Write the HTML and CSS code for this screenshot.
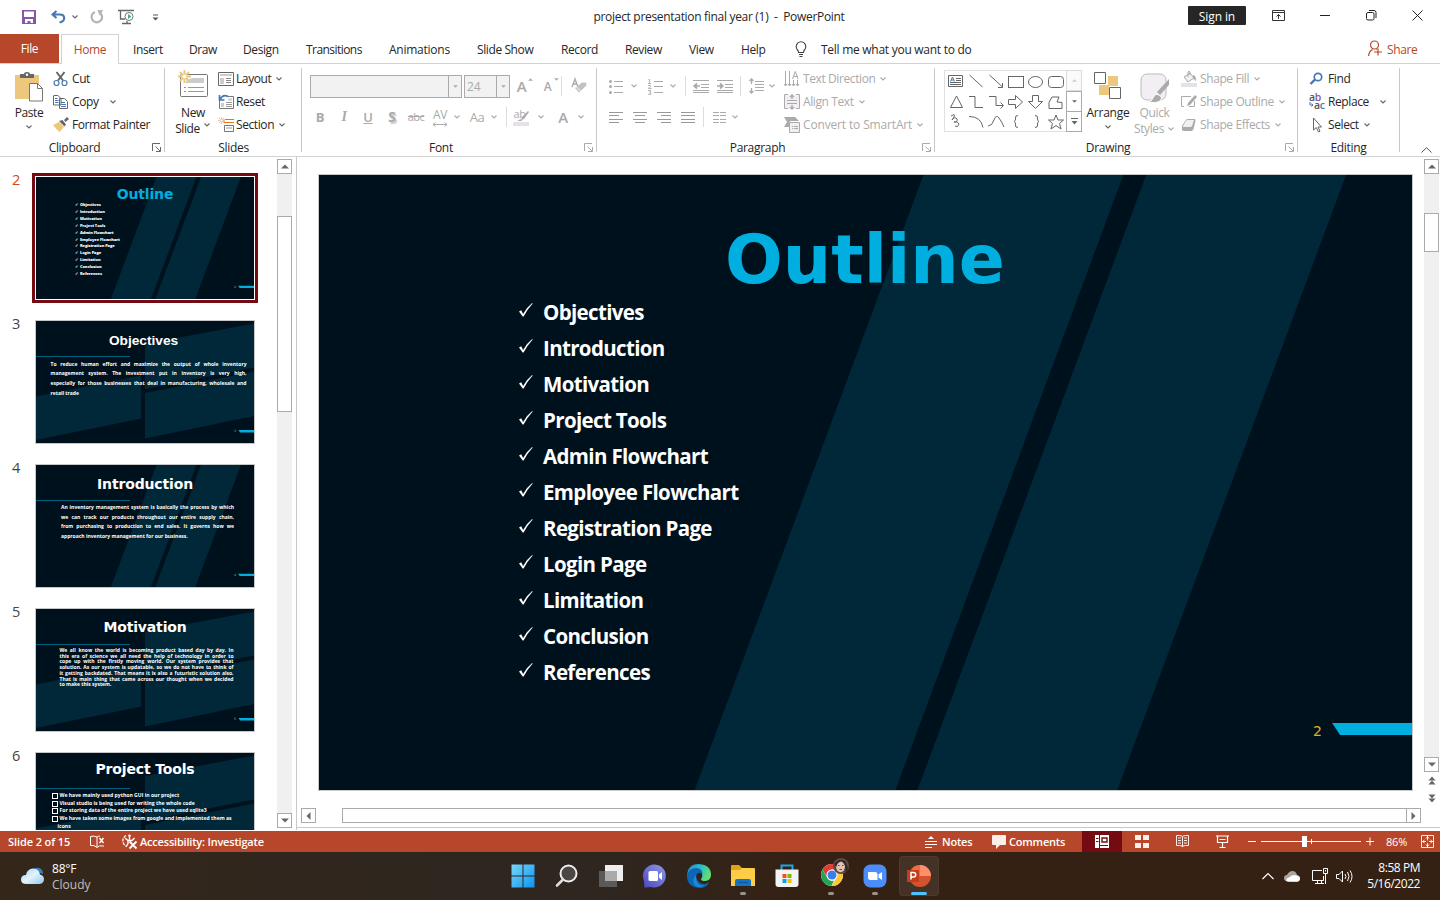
FILE: index.html
```html
<!DOCTYPE html>
<html lang="en">
<head>
<meta charset="utf-8">
<title>project presentation final year (1) - PowerPoint</title>
<link rel="stylesheet" href="styles.css">
</head>
<body>
<svg class="defs" width="0" height="0">
  <defs>
    <symbol id="chev" viewBox="0 0 8 6"><path d="M1.5 1.5 4 4 6.5 1.5" fill="none" stroke="currentColor" stroke-width="1.1"/></symbol>
    <symbol id="launch" viewBox="0 0 9 9"><path d="M.5 8V.5H8M3.500 3.500 8 8M8.500 4V8.500H4" fill="none" stroke="currentColor"/></symbol>
    <symbol id="tri-up" viewBox="0 0 8 5"><path d="M0 4.500 4 .5 8 4.500z" fill="currentColor"/></symbol>
    <symbol id="tri-down" viewBox="0 0 8 5"><path d="M0 .5 4 4.500 8 .5z" fill="currentColor"/></symbol>
    <symbol id="tick" viewBox="0 0 16 16"><path d="M1 9.400 3.200 8.200l1.900 3.700Q9 5 14.200 1l.5.4Q9.500 7 5.600 14.500H4.700z" fill="#fff"/></symbol>
    <symbol id="bg-stripes" viewBox="0 0 1094 615" preserveAspectRatio="none">
      <path d="M0 0h1094v615H0z" fill="#00111e"/>
      <path d="M605 0h200L577 615H376zM828 0h200L799 615H599z" fill="#002838"/>
      <path d="M1014 548h80v12h-72z" fill="#00aedf"/>
    </symbol>
    <symbol id="bg-panels" viewBox="0 0 218 122" preserveAspectRatio="none">
      <path d="M0 0h218v122H0z" fill="#00111e"/>
      <path d="M109 23 218 2.500v44L109 68zM109 72 218 50.500V95L109 117.500zM0 75.500 105 54.500v43L0 119z" fill="#002838"/>
      <path d="M202.500 109H218v2.500h-14z" fill="#00aedf"/>
    </symbol>
  </defs>
</svg>

<header class="titlebar">
  <div class="quick">
    <svg class="q-save" width="14" height="14" viewBox="0 0 14 14"><path d="M0 0h14v14H0z" fill="#8656ad"/><path d="M2 1.500h10V7H2zM3 9h8v4H8.500v-2h-3v2H3z" fill="#fff"/></svg>
    <svg class="q-undo" width="15" height="14" viewBox="0 0 15 14"><path d="M5.500 1 1.500 4.500l4 3.500M2 4.500h7Q13 4.500 13.200 8 13.200 11.500 8.500 12.500" fill="none" stroke="#4479b5" stroke-width="2.100"/></svg>
    <svg class="q-chev chev" width="8" height="6"><use href="#chev"/></svg>
    <svg class="q-redo" width="14" height="14" viewBox="0 0 14 14"><path d="M5 2A5.300 5.300 0 1 0 10.500 3.200" fill="none" stroke="#b4b4b4" stroke-width="2.200"/><path d="M7.500 0H13L9.800 6z" fill="#b4b4b4"/></svg>
    <svg class="q-show" width="17" height="16" viewBox="0 0 17 16"><path d="M0 1.500h16M2.500 2v8H7M9 12v2.500M4 14.500h9" fill="none" stroke="#666" stroke-width="1.300"/><circle cx="11" cy="7.500" r="4" fill="#fff" stroke="#777"/><path d="M10 5v5l3.500-2.500z" fill="#4ea683"/></svg>
    <svg class="q-more" width="7" height="7" viewBox="0 0 7 7"><path d="M1 1h5" stroke="#555"/><path d="M.5 3.500h6L3.500 6.500z" fill="#555"/></svg>
  </div>
  <div class="doc-title">project presentation final year (1)&nbsp; -&nbsp; PowerPoint</div>
  <div class="window-tools">
    <span class="signin">Sign in</span>
    <svg width="13" height="11" viewBox="0 0 13 11"><path d="M.5.5h12v10H.5zM.5 2.500h12M6.500 9V4.500M4.500 6.500l2-2 2 2" fill="none" stroke="#333"/></svg>
    <svg width="11" height="11" viewBox="0 0 11 11"><path d="M0 5.500h10" stroke="#222"/></svg>
    <svg width="11" height="11" viewBox="0 0 11 11"><rect x=".5" y="2.500" width="7.500" height="7.500" rx="1.500" fill="none" stroke="#222"/><path d="M3 .5h5Q10 .5 10 2.500V8" fill="none" stroke="#222"/></svg>
    <svg width="11" height="11" viewBox="0 0 11 11"><path d="m.5.500 10 10M10.500.5l-10 10" stroke="#222"/></svg>
  </div>
</header>

<nav class="tabs">
  <span class="file">File</span><span class="home">Home</span>
  <span>Insert</span><span>Draw</span><span>Design</span><span>Transitions</span><span>Animations</span><span>Slide Show</span><span>Record</span><span>Review</span><span>View</span><span>Help</span>
  <svg class="bulb" width="12" height="17" viewBox="0 0 12 17"><path d="M3.500 11.500Q3.500 9.800 2.200 8.500 1.200 7.300 1.200 5.500A4.700 4.700 0 0 1 10.800 5.500Q10.800 7.300 9.800 8.500 8.500 9.800 8.500 11.500zM4 13.500h4M4.500 15.500h3" fill="none" stroke="#444" stroke-width="1.100"/></svg>
  <span class="tell">Tell me what you want to do</span>
  <span class="share"><svg width="14" height="17" viewBox="0 0 14 17"><path d="M.6 16Q1 11 4.600 9.600M9 9.500 8.500 9.200" fill="none" stroke="#b7472a" stroke-width="1.200"/><circle cx="6.500" cy="5" r="4" fill="none" stroke="#b7472a" stroke-width="1.200"/><path d="M6 12h8M10 8.500v7" stroke="#b7472a" stroke-width="1.200"/></svg>Share</span>
</nav>

<section class="ribbon">
  <div class="group g-clip">
    <div class="body">
      <div class="big paste">
        <svg width="28" height="30" viewBox="0 0 28 30"><path d="M0 3h24v24H0z" fill="#edc77d"/><path d="M5 6V2h4Q9 0 12 0t3 2h4v4z" fill="#666"/><circle cx="12" cy="2.700" r="1.200" fill="#fff"/><path d="M14.500 11.500h8l5 5v12.500h-13z" fill="#fff" stroke="#777"/><path d="M22.500 11.500v5h5" fill="none" stroke="#777"/></svg>
        <span>Paste</span><svg class="chev" width="8" height="6"><use href="#chev"/></svg>
      </div>
      <div class="rows">
        <div class="cmd"><svg width="16" height="16" viewBox="0 0 16 16"><path d="M3.500 1 10 9.500M11.500 1 5 9.500" stroke="#666" stroke-width="2"/><circle cx="3.500" cy="12" r="2.500" fill="none" stroke="#4479b5" stroke-width="1.200"/><circle cx="11.500" cy="12" r="2.500" fill="none" stroke="#4479b5" stroke-width="1.200"/></svg><span>Cut</span></div>
        <div class="cmd"><svg width="16" height="16" viewBox="0 0 16 16"><path d="M1 1.500h4l3 3V11H.5V1.500M6.500 4.500h5l3 3v7h-8z" fill="#fff" stroke="#666"/><path d="M2 4.500h2.500M2 6.500h3.500M2 8.500h3.500M8 8.500h4M8 10.500h5M8 12.500h5" stroke="#4479b5"/></svg><span>Copy</span><svg class="chev wide" width="8" height="6"><use href="#chev"/></svg></div>
        <div class="cmd"><svg width="16" height="16" viewBox="0 0 16 16"><path d="M0 8 6 5l5 5-4.500 5Q4 13 0 8z" fill="#edc77d"/><path d="m6 4 5.500 5.500 1.500-2L9.500 3zM11 3l3-3 2 2-3.500 3z" fill="#666"/></svg><span>Format Painter</span></div>
      </div>
    </div>
    <div class="label">Clipboard</div><svg class="launch" width="9" height="9"><use href="#launch"/></svg>
  </div>

  <div class="group g-slides">
    <div class="body">
      <div class="big newslide">
        <svg width="31" height="28" viewBox="0 0 31 28"><rect x="2.500" y="4.500" width="27" height="22" rx="1" fill="#fff" stroke="#777"/><path d="M14 8h12v5H8v-2z" fill="#ccc"/><path d="M6 17.500h2M10 17.500h16M6 21.500h2M10 21.500h16" stroke="#999"/><path d="M6.500 0v13M0 6.500h13M2 2l9 9M11 2l-9 9" stroke="#edc77d" stroke-width="2"/><circle cx="6.500" cy="6.500" r="2" fill="#fff"/></svg>
        <span>New</span><span class="with-chev">Slide <svg class="chev" width="8" height="6"><use href="#chev"/></svg></span>
      </div>
      <div class="rows">
        <div class="cmd"><svg width="16" height="16" viewBox="0 0 16 16"><path d="M.5 1.500h15v13H.5z" fill="#fff" stroke="#666"/><path d="M2 3h12v2H2zM2 7h4v6H2z" fill="#ccc"/><path d="M8 7.500h5M8 9.500h5M8 11.500h5" stroke="#888"/></svg><span>Layout</span><svg class="chev" width="8" height="6"><use href="#chev"/></svg></div>
        <div class="cmd"><svg width="16" height="16" viewBox="0 0 16 16"><path d="M1.500 6v8.500h14v-12H9" fill="none" stroke="#777"/><path d="M10 4.500h4v2h-4zM3 9h3v4H3z" fill="#ccc"/><path d="M8 8.500h6M8 10.500h6M8 12.500h6" stroke="#999"/><path d="M1.500 1v5h5M2 5.500Q5 0 10 2.500" fill="none" stroke="#4479b5" stroke-width="1.700"/></svg><span>Reset</span></div>
        <div class="cmd"><svg width="16" height="16" viewBox="0 0 16 16"><path d="M7 2.500h9" stroke="#e8731e"/><path d="M6 5.500h10M6 2.500v3" stroke="#e8731e"/><path d="M6.500 8.500h9v6h-9z" fill="#fff" stroke="#777"/><path d="M8 10h6v2H8z" fill="#ccc"/><path d="M3.500 0v7M0 3.500h7M1 1l5 5M6 1 1 6" stroke="#edc77d"/><circle cx="3.500" cy="3.500" r="1" fill="#fff"/></svg><span>Section</span><svg class="chev" width="8" height="6"><use href="#chev"/></svg></div>
      </div>
    </div>
    <div class="label">Slides</div>
  </div>

  <div class="group g-font off">
    <div class="stack">
      <div class="line">
        <div class="combo c-name"><span></span><i><svg width="5" height="3" viewBox="0 0 8 5"><use href="#tri-down"/></svg></i></div>
        <div class="combo c-size"><span>24</span><i><svg width="5" height="3" viewBox="0 0 8 5"><use href="#tri-down"/></svg></i></div>
        <span class="cell grow-a">A<svg width="5" height="3" viewBox="0 0 8 5"><use href="#tri-up"/></svg></span>
        <span class="cell shrink-a">A<svg width="5" height="3" viewBox="0 0 8 5"><use href="#tri-down"/></svg></span>
        <i class="sep s5"></i>
        <svg class="eraser" width="16" height="16" viewBox="0 0 16 16"><path d="M1 9 4 1l3 8M2 6h4" fill="none" stroke="#aaa" stroke-width="1.400"/><path d="m4 10 7-5.500h4l.5 3L8 14.500z" fill="#c4c0c6"/><path d="m5.500 9 4 4" stroke="#fff"/></svg>
      </div>
      <div class="line l2">
        <b class="cell">B</b><em class="cell">I</em><u class="cell">U</u><span class="cell sh">S</span><s class="cell">abc</s><span class="cell av">AV<svg width="16" height="5" viewBox="0 0 16 5"><path d="M1 2.500h14M3.500.5l-2.500 2 2.500 2M12.500.5l2.500 2-2.500 2" fill="none" stroke="#aaa"/></svg></span><svg class="chev c1" width="8" height="6"><use href="#chev"/></svg><span class="cell aa">Aa</span><svg class="chev c1" width="8" height="6"><use href="#chev"/></svg><i class="sep s2"></i><span class="cell hl">ab<svg width="17" height="15" viewBox="0 0 17 15"><path d="M0 11h16v4H0z" fill="#e6e0e8"/><path d="m15 0-6 6-1 3 3-1 5-7z" fill="#aaa"/><path d="M8 8 4 10h5z" fill="#aaa"/></svg></span><svg class="chev c3" width="8" height="6"><use href="#chev"/></svg><span class="cell fa">A</span><svg class="chev c2" width="8" height="6"><use href="#chev"/></svg>
      </div>
    </div>
    <div class="label">Font</div><svg class="launch" width="9" height="9"><use href="#launch"/></svg>
  </div>

  <div class="group g-para off">
    <div class="body">
      <div class="stack p-stack">
        <div class="line">
          <span class="cell"><svg width="14" height="15" viewBox="0 0 14 15"><path d="M5 2.500h9M5 7.500h9M5 13.500h9" stroke="#aaa"/><circle cx="1.500" cy="2.500" r="1.500" fill="#aaa"/><circle cx="1.500" cy="7.500" r="1.500" fill="#aaa"/><circle cx="1.500" cy="13.500" r="1.500" fill="#aaa"/></svg></span><svg class="chev c2" width="8" height="6"><use href="#chev"/></svg>
          <span class="cell c5"><svg width="15" height="17" viewBox="0 0 15 17"><path d="M6 3.500h9M6 8.500h9M6 14.500h9" stroke="#aaa"/><path d="M.5 1.500h1.200V5M0 5.500h3M0 7.500h2.500v1.200L.5 10v.5h3M0 12.500h3l-1.500 1.800 1.500.5v1.500H0" fill="none" stroke="#aaa" stroke-width=".9"/></svg></span><svg class="chev c2" width="8" height="6"><use href="#chev"/></svg>
          <i class="sep s7"></i>
          <span class="cell c3"><svg width="16" height="13" viewBox="0 0 16 13"><path d="M0 .5h16M8 4.500h8M8 7.500h8M0 10.500h16M0 12.500h16" stroke="#aaa"/><path d="M7 6H2M4 3.500 1.200 6 4 8.500" fill="none" stroke="#aaa" stroke-width="1.700"/></svg></span>
          <span class="cell"><svg width="16" height="13" viewBox="0 0 16 13"><path d="M0 .5h16M8 4.500h8M8 7.500h8M0 10.500h16M0 12.500h16" stroke="#aaa"/><path d="M0 6h5M3 3.500 5.800 6 3 8.500" fill="none" stroke="#aaa" stroke-width="1.700"/></svg></span>
          <i class="sep s3"></i>
          <span class="cell c3"><svg width="15" height="16" viewBox="0 0 15 16"><path d="M6 3.500h9M6 6.500h9M6 9.500h9M6 12.500h9" stroke="#aaa"/><path d="M2.500 1v5M.5 3l2-2 2 2M2.500 15v-5M.5 13l2 2 2-2" fill="none" stroke="#aaa" stroke-width="1.300"/></svg></span><svg class="chev" width="8" height="6"><use href="#chev"/></svg>
        </div>
        <div class="line l2">
          <span class="cell"><svg width="14" height="11" viewBox="0 0 14 11"><path d="M0 .5h14M0 3.500h10M0 7.500h14M0 10.500h10" stroke="#999"/></svg></span>
          <span class="cell"><svg width="14" height="11" viewBox="0 0 14 11"><path d="M0 .5h14M2 3.500h10M0 7.500h14M2 10.500h10" stroke="#999"/></svg></span>
          <span class="cell"><svg width="14" height="11" viewBox="0 0 14 11"><path d="M0 .5h14M4 3.500h10M0 7.500h14M4 10.500h10" stroke="#999"/></svg></span>
          <span class="cell"><svg width="14" height="11" viewBox="0 0 14 11"><path d="M0 .5h14M0 3.500h14M0 7.500h14M0 10.500h14" stroke="#999"/></svg></span>
          <i class="sep s2b"></i>
          <span class="cell c3"><svg width="13" height="11" viewBox="0 0 13 11"><path d="M0 .5h6M7 .5h6M0 3.500h6M7 3.500h6M0 7.500h6M7 7.500h6M0 10.500h6M7 10.500h6" stroke="#aaa"/></svg></span><svg class="chev" width="8" height="6"><use href="#chev"/></svg>
        </div>
      </div>
      <div class="rows">
        <div class="cmd"><svg width="16" height="16" viewBox="0 0 16 16"><path d="M1.500 0v15M5.500 0v15M9.500 9v6M13.500 9v6M0 13l1.500 2L3 13M4 13l1.500 2L7 13M8 13l1.500 2 1.500-2M12 13l1.500 2 1.500-2M8.500 8l2.800-7.500L14 8M9.500 5.500h4" fill="none" stroke="#aaa"/></svg><span>Text Direction</span><svg class="chev" width="8" height="6"><use href="#chev"/></svg></div>
        <div class="cmd"><svg width="16" height="16" viewBox="0 0 16 16"><path d="M1 1h14v14H1z" fill="#f2eef4"/><path d="M4 .5H.5v14H4M12 .5h3.500v14H12M3 6.500h10M3 9.500h10" fill="none" stroke="#aaa"/><path d="M8 5V1M6 3l2-2 2 2M8 11v4M6 13l2 2 2-2" fill="none" stroke="#aaa" stroke-width="1.300"/></svg><span>Align Text</span><svg class="chev" width="8" height="6"><use href="#chev"/></svg></div>
        <div class="cmd"><svg width="16" height="16" viewBox="0 0 16 16"><path d="M0 0h11l4 4H7L5 5v5H0l3-5z" fill="#aaa"/><path d="M5.500 5.500h10v10h-10z" fill="#f2eef4" stroke="#aaa"/><path d="M8 9.500h1M10 9.500h4M8 11.500h1M10 11.500h4" stroke="#aaa"/></svg><span class="smart">Convert to SmartArt</span><svg class="chev" width="8" height="6"><use href="#chev"/></svg></div>
      </div>
    </div>
    <div class="label">Paragraph</div><svg class="launch" width="9" height="9"><use href="#launch"/></svg>
  </div>

  <div class="group g-draw">
    <div class="body">
      <div class="gallery">
        <svg width="122" height="61" viewBox="0 0 122 61" fill="none" stroke="#666">
          <path d="M3.500 4.500h14v11h-14zM11 7.500h5M11 9.500h5M5 11.500h11M5 13.500h11"/><path d="M5.500 10.500 7.500 6l2 4.500M6 9h3" stroke="#4479b5"/>
          <path d="m24.500 4 13 12M44.500 4l13 12M57.500 12v4.500H53"/>
          <rect x="63.500" y="5.500" width="15" height="11"/><ellipse cx="90.500" cy="11" rx="7" ry="5.500"/><rect x="103.500" y="5.500" width="15" height="11" rx="3"/>
          <path d="m11.500 25 6 11.500h-12zM24 25.500h6v11h8M44 25.500h7v9h7M55.500 31.500l3 3-3 3M63.500 28.500h7v-4l7 6.500-7 6.500v-4h-7zM87.500 24.500h6v6h4l-7 7-7-7h4zM107 26h7l-2 5 5 .5v6h-13v-6z"/>
          <path d="M6 45q5-3 3 1l-2 3q3-4 5-1 1 3-3 3 4-1 5 2-1 4-4 2M24 45.500q12 0 14 11M43 55q4 0 6-6t5-2 5 9M73 44.500q-3 0-2.500 2.500 .5 3-1.500 3.500 2 .5 1.500 3.500-.5 2.500 2.500 2.500M90 44.500q3 0 2.500 2.500-.5 3 1.500 3.500-2 .5-1.500 3.500.5 2.500-2.500 2.500M111 44l2 5h5.500l-4 3.500 1.500 5.500-5-3.500-5 3.500 1.500-5.500-4-3.500h5.500z"/>
        </svg>
        <div class="gal-btns"><i class="dim"><svg width="5" height="3" viewBox="0 0 8 5"><use href="#tri-up"/></svg></i><i><svg width="5" height="3" viewBox="0 0 8 5"><use href="#tri-down"/></svg></i><i><svg width="7" height="7" viewBox="0 0 7 7"><path d="M0 .5h7" stroke="#666"/><path d="M.5 3h6l-3 3.500z" fill="#666"/></svg></i></div>
      </div>
      <div class="big arrange">
        <svg width="28" height="28" viewBox="0 0 28 28"><path d="M14 4h10v10H14zM5 13h10v10H5z" fill="#edc77d"/><path d="M.5.5h11v11H.5zM15.500 15.500h11v11h-11z" fill="#fff" stroke="#666"/></svg>
        <span>Arrange</span><svg class="chev" width="8" height="6"><use href="#chev"/></svg>
      </div>
      <div class="big styles off">
        <svg width="30" height="30" viewBox="0 0 30 30"><rect x="1" y="1" width="25" height="26" rx="6" fill="#f2eef4" stroke="#bbb"/><path d="M29 6v6l-9 10-3-3z" fill="#aaa"/><path d="M7 29q5 0 6-4 2-5 6-3t2 5q-4 4-14 2z" fill="#aaa" stroke="#fff"/></svg>
        <span>Quick</span><span class="with-chev">Styles <svg class="chev" width="8" height="6"><use href="#chev"/></svg></span>
      </div>
      <div class="rows off">
        <div class="cmd"><svg width="16" height="16" viewBox="0 0 16 16"><path d="M0 12h16v4H0z" fill="#e6e0e8"/><path d="m3 6 6-4 4 5-6 4zM7 6V1Q8-.5 9 1v3" fill="#f2eef4" stroke="#aaa"/><path d="M12 4q3 0 3 6-2-1-3-4z" fill="#aaa"/></svg><span>Shape Fill</span><svg class="chev" width="8" height="6"><use href="#chev"/></svg></div>
        <div class="cmd"><svg width="16" height="16" viewBox="0 0 16 16"><path d="M10 2.500H.5v10H3M13.500 7v5.500H8" fill="none" stroke="#aaa"/><path d="m14 1 2 2-7 8-3 1 1-3z" fill="#aaa"/></svg><span>Shape Outline</span><svg class="chev" width="8" height="6"><use href="#chev"/></svg></div>
        <div class="cmd"><svg width="16" height="16" viewBox="0 0 16 16"><path d="M1 9 4 4q1-2 3-2h6q2 0 1.500 2l-2 8Q12 14 10 14H3Q0 14 1 9z" fill="#aaa"/><path d="m2 9 3-5.500Q5.500 3 7 3h6l-2 6Q10.500 10 9 10H2z" fill="#f2eef4"/></svg><span>Shape Effects</span><svg class="chev" width="8" height="6"><use href="#chev"/></svg></div>
      </div>
    </div>
    <div class="label">Drawing</div><svg class="launch dim" width="9" height="9"><use href="#launch"/></svg>
  </div>

  <div class="group g-edit">
    <div class="body">
      <div class="rows">
        <div class="cmd"><svg width="16" height="16" viewBox="0 0 16 16"><circle cx="9" cy="6" r="3.700" fill="none" stroke="#4479b5" stroke-width="1.700"/><path d="m6 8.500-4.500 4.500" stroke="#4479b5" stroke-width="2.400"/></svg><span>Find</span></div>
        <div class="cmd"><svg class="rep" width="17" height="17" viewBox="0 0 17 17"><text x="0" y="7.500" fill="#555">a<tspan fill="#8656ad">b</tspan></text><text x="5" y="15.500" fill="#555">a<tspan fill="#4479b5">c</tspan></text><path d="M1 9v3h2.500M2.500 10.500 4 12l-1.500 1.500" fill="none" stroke="#4479b5"/></svg><span>Replace</span><svg class="chev wide" width="8" height="6"><use href="#chev"/></svg></div>
        <div class="cmd"><svg width="16" height="16" viewBox="0 0 16 16"><path d="M4.500 1v12l2.700-2.500L9.500 15l1.500-.8L9 10h3.500z" fill="#fff" stroke="#666"/></svg><span>Select</span><svg class="chev" width="8" height="6"><use href="#chev"/></svg></div>
      </div>
    </div>
    <div class="label">Editing</div>
  </div>
  <svg class="collapse" width="11" height="6" viewBox="0 0 11 6"><path d="M.5 5.500 5.500.7l5 4.800" fill="none" stroke="#555"/></svg>
</section>

<main class="work">
  <aside class="panel">
    <div class="thumbs">
      <div class="item sel"><span class="num">2</span>
        <div class="thumb t2"><svg class="bg"><use href="#bg-stripes"/></svg>
          <h3>Outline</h3>
          <ul><li>Objectives</li><li>Introduction</li><li>Motivation</li><li>Project Tools</li><li>Admin Flowchart</li><li>Employee Flowchart</li><li>Registration Page</li><li>Login Page</li><li>Limitation</li><li>Conclusion</li><li>References</li></ul>
          <span class="pg">2</span>
        </div></div>
      <div class="item"><span class="num">3</span>
        <div class="thumb t3"><svg class="bg"><use href="#bg-panels"/></svg>
          <h3>Objectives</h3><hr>
          <div class="text"><p>To reduce human effort and maximize the output of whole inventory</p><p>management system. The investment put in inventory is very high,</p><p>especially for those businesses that deal in manufacturing, wholesale and</p><p class="last">retail trade</p></div>
          <span class="pg">3</span>
        </div></div>
      <div class="item"><span class="num">4</span>
        <div class="thumb t4"><svg class="bg"><use href="#bg-stripes"/></svg>
          <h3>Introduction</h3><hr>
          <div class="text"><p>An inventory management system is basically the process by which</p><p>we can track our products throughout our entire supply chain,</p><p>from purchasing to production to end sales. It governs how we</p><p class="last">approach inventory management for our business.</p></div>
          <span class="pg">4</span>
        </div></div>
      <div class="item"><span class="num">5</span>
        <div class="thumb t5"><svg class="bg"><use href="#bg-panels"/></svg>
          <h3>Motivation</h3><hr>
          <div class="text"><p>We all know the world is becoming product based day by day. In</p><p>this era of science we all need the help of technology in order to</p><p>cope up with the firstly moving world. Our system provides that</p><p>solution. As our system is updatable, so we do not have to think of</p><p>it getting backdated. That means it is also a futuristic solution also.</p><p>That is main thing that came across our thought when we decided</p><p class="last">to make this system.</p></div>
          <span class="pg">5</span>
        </div></div>
      <div class="item"><span class="num">6</span>
        <div class="thumb t6"><svg class="bg"><use href="#bg-panels"/></svg>
          <h3>Project Tools</h3><hr>
          <div class="text"><p class="box">We have mainly used python GUI in our project</p><p class="box">Visual studio is being used for writing the whole code</p><p class="box">For storing data of the entire project we have used sqlite3</p><p class="box">We have taken some images from google and implemented them as</p><p>icons</p></div>
        </div></div>
    </div>
    <div class="vscroll"><i class="btn"><svg width="8" height="5"><use href="#tri-up"/></svg></i><i class="grip"></i><i class="btn end"><svg width="8" height="5"><use href="#tri-down"/></svg></i></div>
  </aside>

  <section class="editor">
    <div class="stage">
      <div class="slide"><svg class="bg"><use href="#bg-stripes"/></svg>
        <h1>Outline</h1>
        <ul>
          <li><svg width="16" height="16"><use href="#tick"/></svg>Objectives</li><li><svg width="16" height="16"><use href="#tick"/></svg>Introduction</li><li><svg width="16" height="16"><use href="#tick"/></svg>Motivation</li><li><svg width="16" height="16"><use href="#tick"/></svg>Project Tools</li><li><svg width="16" height="16"><use href="#tick"/></svg>Admin Flowchart</li><li><svg width="16" height="16"><use href="#tick"/></svg>Employee Flowchart</li><li><svg width="16" height="16"><use href="#tick"/></svg>Registration Page</li><li><svg width="16" height="16"><use href="#tick"/></svg>Login Page</li><li><svg width="16" height="16"><use href="#tick"/></svg>Limitation</li><li><svg width="16" height="16"><use href="#tick"/></svg>Conclusion</li><li><svg width="16" height="16"><use href="#tick"/></svg>References</li>
        </ul>
        <span class="pageno">2</span>
      </div>
      <div class="vscroll main-scroll"><i class="btn"><svg width="8" height="5"><use href="#tri-up"/></svg></i><i class="grip"></i><i class="btn end"><svg width="8" height="5"><use href="#tri-down"/></svg></i>
        <div class="jump"><svg width="8" height="9" viewBox="0 0 8 9"><path d="M.5 4.500 4 .5l3.500 4zM.5 8.500 4 4.500l3.500 4z" fill="#666"/></svg><svg width="8" height="9" viewBox="0 0 8 9"><path d="M.5.5 4 4.500 7.500.5zM.5 4.500 4 8.500l3.500-4z" fill="#666"/></svg></div></div>
    </div>
    <div class="hscroll"><i class="btn"><svg width="5" height="8" viewBox="0 0 5 8"><path d="M4.500 0 .5 4l4 4z" fill="#666"/></svg></i><i class="grip"></i><i class="btn"><svg width="5" height="8" viewBox="0 0 5 8"><path d="M.5 0 4.500 4l-4 4z" fill="#666"/></svg></i></div>
  </section>
</main>

<footer class="status">
  <span class="st-slide">Slide 2 of 15</span>
  <svg class="st-spell" width="15" height="13" viewBox="0 0 15 13"><path d="M7 2Q4 .5.500 1.500v9Q4 9.500 7 12.500 8.500 10 14 11M7 2v10M7 2Q8.500 1 10 1" fill="none" stroke="#fff"/><path d="m9.500 3 4 5M13.500 3l-4 5" stroke="#fff" stroke-width="1.500"/></svg>
  <svg class="st-acc" width="17" height="15" viewBox="0 0 17 15"><path d="M5 1.500A6 6 0 0 0 6 12.500" fill="none" stroke="#fff" stroke-width="1.300" stroke-dasharray="3 1"/><path d="m4 4 3 2.500h4L13.500 4M7 6.500v3L5.500 12M8.500 3v3.500" fill="none" stroke="#fff" stroke-width="1.400"/><circle cx="8.500" cy="1.800" r="1.300" fill="#fff"/><path d="m8.500 7.500 7 7M15.500 7.500l-7 7" stroke="#fff" stroke-width="1.800"/></svg>
  <span class="st-acctext">Accessibility: Investigate</span>
  <svg class="st-notes" width="12" height="13" viewBox="0 0 12 13"><path d="M0 6.500h12M0 9.500h12M0 12.500h7" stroke="#fff"/><path d="M3 4 6 1l3 3z" fill="#fff"/></svg>
  <span class="st-n">Notes</span>
  <svg class="st-com" width="14" height="14" viewBox="0 0 14 14"><path d="M1 0h12q1 0 1 1v8q0 1-1 1H8l-4 4v-4H1q-1 0-1-1V1q0-1 1-1z" fill="#fbeeea"/></svg>
  <span class="st-c">Comments</span>
  <span class="st-view on"><svg width="14" height="13" viewBox="0 0 14 13"><path d="M0 0h14v13H0z" fill="#fff"/><path d="M4.500 0v13M1 3.500h2.500M1 6.500h2.500M5 10.500h8" stroke="#750b12"/><path d="M7 3h5v4H7z" fill="#fff" stroke="#750b12" stroke-width="1.400"/></svg></span>
  <span class="st-view"><svg width="14" height="13" viewBox="0 0 14 13"><path d="M0 0h6v5H0zM8 0h6v5H8zM0 8h6v5H0zM8 8h6v5H8z" fill="#fbeeea"/></svg></span>
  <span class="st-view"><svg width="13" height="13" viewBox="0 0 13 13"><path d="M.5.5h3q3 0 3 1.500 0-1.500 3-1.500h3v10h-3q-3 0-3 1.500 0-1.500-3-1.500h-3zM6.500 2v10M2 3h3M2 5.500h3M2 8h3M8 3h3M8 5.500h3M8 8h3" fill="none" stroke="#fbeeea"/></svg></span>
  <span class="st-view"><svg width="13" height="13" viewBox="0 0 13 13"><path d="M0 1h13M1.500 1v6.500h10V1M3.500 4.500h6M6.500 8v4M3.500 12.500h6" fill="none" stroke="#fff" stroke-width="1.200"/></svg></span>
  <svg class="st-zoom" width="127" height="13" viewBox="0 0 127 13"><path d="M0 6.500h8M13 6.500h100M118 6.500h8M122 2.500v8M63.500 4v5" stroke="#fff"/><path d="M54 1h5v11h-5z" fill="#fff"/></svg>
  <span class="st-pct">86%</span>
  <svg class="st-fit" width="13" height="13" viewBox="0 0 13 13"><path d="M.5.5h12v12H.5zM6.500 1v4.500M6.500 8v4M1 6.500h4M8 6.500h4M5 3.500l1.500-2 1.500 2M5 9.500l1.500 2 1.500-2M3.500 5l-2 1.500 2 1.500M9.500 5l2 1.500-2 1.500" fill="none" stroke="#fff" stroke-width=".9"/></svg>
</footer>

<div class="taskbar">
  <div class="weather">
    <svg width="23" height="18" viewBox="0 0 23 18"><defs><linearGradient id="cl" x2="1" y2="1"><stop stop-color="#a8d4f5"/><stop offset=".5" stop-color="#e2f2fd"/><stop offset="1" stop-color="#8fc4ee"/></linearGradient></defs><path d="M11 3q3-3 7-2 4 1 4 6z" fill="#3c7fbf"/><path d="M5.500 17Q0 17 0 12.500 0 8 5 8 6 2 12 1.500q6 0 7 6 4 1 4 4.800 0 4.200-4.500 4.700z" fill="url(#cl)"/></svg>
    <div><span>88°F</span><span class="sub">Cloudy</span></div>
  </div>
  <div class="apps">
    <span><svg width="24" height="24" viewBox="0 0 24 24"><defs><linearGradient id="wn" x2="1" y2="1"><stop stop-color="#78d8fc"/><stop offset="1" stop-color="#0b93ee"/></linearGradient></defs><path d="M.5.5h11v11H.5zM12.500.5h11v11h-11zM.5 12.500h11v11H.5zM12.500 12.500h11v11h-11z" fill="url(#wn)"/></svg></span>
    <span><svg width="24" height="24" viewBox="0 0 24 24"><circle cx="13.500" cy="9.500" r="8" fill="#4c4745" stroke="#eee" stroke-width="2"/><path d="m8 15.500-6 6" stroke="#ddd" stroke-width="2.600" stroke-linecap="round"/></svg></span>
    <span><svg width="24" height="24" viewBox="0 0 24 24"><path d="M6 1h18v16H6z" fill="#eee"/><path d="M0 7h18v16H0z" fill="#5b5a59"/><path d="M6 7h12v10H6z" fill="#aaa"/></svg></span>
    <span><svg width="24" height="24" viewBox="0 0 24 24"><defs><linearGradient id="tm" x1="1" x2="0" y2="1"><stop stop-color="#8b9be5"/><stop offset="1" stop-color="#4d46c2"/></linearGradient></defs><path d="M12 .5A11.500 11.500 0 1 1 8 23l-6.500.5L1 17A11.500 11.500 0 0 1 12 .5z" fill="url(#tm)"/><rect x="5.500" y="7" width="9.500" height="10" rx="1.500" fill="#fff"/><path d="m16 10.500 3-2.500v8l-3-2.500z" fill="#fff"/></svg></span>
    <span><svg width="24" height="24" viewBox="0 0 24 24"><defs><linearGradient id="eg" x2="1" y2=".4"><stop stop-color="#1a8fd9"/><stop offset=".55" stop-color="#2dbcc8"/><stop offset="1" stop-color="#61dd72"/></linearGradient></defs><path d="M12 0Q24 1 24 11q0 5.500-6 6-4 0-4-2 2-2 1-5-1-3-6-3-6 1-9 6Q0 0 12 0z" fill="url(#eg)"/><path d="M0 12q1-8 10-8 6 1 5.500 7-2-3-4-2-3 1-2 5 2 6 8 6 2 0 5-2-3 6-10 6Q0 23 0 12z" fill="#0c65b6"/><path d="M9 14q0 7 8.500 8-9 3-11-3-1-4 2.500-8z" fill="#1a8bd8"/></svg></span>
    <span class="run"><svg width="24" height="24" viewBox="0 0 24 24"><path d="M0 2q0-1 1-1h7l3 3h12v8H0z" fill="#e5a210"/><path d="M0 6h9l2-2h12q1 0 1 1v17H0z" fill="#fdcd48"/><path d="M4 22v-5q0-2 2-2h12q2 0 2 2v5z" fill="#1374c7"/><path d="M7 18.500h10" stroke="#0a549b"/></svg></span>
    <span><svg width="24" height="24" viewBox="0 0 24 24"><path d="M6.500 6V1.500h11V6" fill="none" stroke="#1da5e8" stroke-width="2"/><path d="M.5 5.500h23V20q0 3-3 3h-17q-3 0-3-3z" fill="#f3f3f3"/><path d="M7.500 10h4v4h-4z" fill="#f25022"/><path d="M12.500 10h4v4h-4z" fill="#7fba00"/><path d="M7.500 15h4v4h-4z" fill="#00a4ef"/><path d="M12.500 15h4v4h-4z" fill="#ffb900"/></svg></span>
    <span class="run"><svg width="30" height="30" viewBox="0 0 30 30" class="chrome"><circle cx="12" cy="17" r="11" fill="#fff"/><path d="M2.500 11.500A11 11 0 0 1 21.500 11.500H12A5.500 5.500 0 0 0 7 19z" fill="#e33b2e"/><path d="M2.500 11.500 7.200 19.700A5.500 5.500 0 0 0 14 22.200L11.500 28A11 11 0 0 1 2.500 11.500z" fill="#23a455"/><path d="M21.500 11.500A11 11 0 0 1 11.500 28l5-8.500Q18.500 15 14 11.500z" fill="#fcc934"/><circle cx="12" cy="17" r="5.500" fill="#fff"/><circle cx="12" cy="17" r="4.500" fill="#3b7ded"/><circle cx="21" cy="8" r="8" fill="#5a4947"/><ellipse cx="20.500" cy="8" rx="4.600" ry="6.200" fill="#e3c2b2"/><path d="M14.500 6q5-7 11-2.500l2.500 7-2.500 5q.5-10-4-12-4 0-5.500 6z" fill="#302524"/><path d="M18 7.500h1.500M22 7.500h1.500M19.500 11.500h2.500" stroke="#6e403e"/></svg></span>
    <span class="run"><svg width="24" height="24" viewBox="0 0 24 24"><rect x=".5" y=".5" width="23" height="23" rx="7" fill="#4b8dfb"/><path d="M5 8h7q2.500 0 2.500 2.500V16H7.500Q5 16 5 13.500z" fill="#fff"/><path d="m15.500 10.500 3.500-2.500v8l-3.500-2.500z" fill="#fff"/></svg></span>
    <span class="run active"><svg width="24" height="24" viewBox="0 0 24 24"><circle cx="13" cy="12" r="11" fill="#d35230"/><path d="M13 1a11 11 0 0 0-10 7l10 4z" fill="#ed6c47"/><path d="M13 1a11 11 0 0 1 11 11H13z" fill="#ff8f6b"/><path d="M0 6h12v12H0z" fill="#c43e1c"/><path d="M4 15.500V8.500h2.500q2.200 0 2.200 2.200T6.500 13H4" fill="none" stroke="#fff" stroke-width="1.500"/></svg></span>
  </div>
  <div class="tray">
    <svg class="tr-up" width="12" height="8" viewBox="0 0 12 8"><path d="m.5 7 5.500-5.500L11.500 7" fill="none" stroke="#fff" stroke-width="1.200"/></svg>
    <svg class="tr-cloud" width="16" height="11" viewBox="0 0 16 11"><path d="M3 10Q0 10 0 7t3-3Q5 0 8.500 0 12 0 13 4q3 .5 3 3t-3 3.500z" fill="#aaa5a1"/><path d="M2 10q0-3 3-3.500Q9 3 13 4.500q3 1 3 3 0 3-3 3.200H4z" fill="#fff"/></svg>
    <svg class="tr-net" width="16" height="17" viewBox="0 0 16 17"><path d="M10 2.500H.5v10h11V8M3 15.500h9M5.500 13v2M9.500 13v2M11.500.5h4v5h-4zM13.500 6v10M13.500 2v1.500" fill="none" stroke="#fff"/></svg>
    <svg class="tr-vol" width="17" height="15" viewBox="0 0 17 15"><path d="M.5 5.500H3L6.500 2v11L3 9.500H.5zM9 5q2 2.500 0 5M11.500 3q3 4.500 0 9M14 1.500q4 6 0 12" fill="none" stroke="#fff"/></svg>
    <div class="clock"><span>8:58 PM</span><span>5/16/2022</span></div>
  </div>
</div>
</body>
</html>
```
FILE: styles.css
```css
* { box-sizing: border-box; }
html, body { margin: 0; width: 1440px; height: 900px; overflow: hidden; }
body { display: flex; flex-direction: column; background: #fff; color: #262626; font: 12px/16px "Open Sans", "Noto Sans", sans-serif; letter-spacing: -.4px; }
svg { display: block; flex: none; overflow: visible; }
i { font-style: normal; display: block; }
.defs { position: absolute; }
.chev { color: #666; }

/* title bar */
.titlebar { height: 34px; flex: none; display: grid; grid-template-columns: 400px 638px 402px; }
.quick { display: flex; align-items: center; height: 32px; padding: 2px 0 0 22px; }
.q-undo { margin-left: 15px; }
.q-chev { margin-left: 5px; }
.q-redo { margin-left: 11px; }
.q-show { margin-left: 14px; }
.q-more { margin-left: 17px; }
.doc-title { text-align: center; padding-top: 9px; letter-spacing: -.31px; }
.window-tools { display: flex; align-items: center; height: 30px; padding-left: 150px; }
.signin { width: 58px; height: 19px; line-height: 21px; background: #262626; color: #fff; text-align: center; border-radius: 1px; letter-spacing: -.1px; margin-right: 26px; }
.window-tools svg + svg { margin-left: 35px; }

/* tabs */
.tabs { height: 30px; flex: none; display: grid; grid-template-columns: 59px 74px 56px 54px 63px 83px 88px 84px 64px 64px 52px 54px 26px 540px auto; border-bottom: 1px solid #d2d2d2; line-height: 31px; }
.tabs > span:nth-child(6) { letter-spacing: -.55px; }
.tabs > span:nth-child(7) { letter-spacing: -.25px; }
.tabs > .tell { letter-spacing: -.27px; }
.file { background: #b7472a; color: #fff; text-align: center; line-height: 29px; height: 29px; }
.home { width: 58px; margin-left: 2px; height: 30px; border: 1px solid #d2d2d2; border-bottom: 0; background: #fff; color: #b7472a; text-align: center; line-height: 29px; }
.bulb { margin-top: 7px; }
.share { display: flex; gap: 5px; color: #b7472a; margin-left: 7px; }
.share svg { margin-top: 6px; }

/* ribbon */
.ribbon { height: 93px; flex: none; display: flex; border-bottom: 1px solid #d2d2d2; }
.group { display: grid; grid-template-rows: 76px 16px; position: relative; }
.group::after { content: ""; position: absolute; right: 0; top: 4px; bottom: 4px; width: 1px; background: #c8c8c8; }
.group > .label { text-align: center; line-height: 15px; color: #262626; letter-spacing: -.3px; }
.launch { position: absolute; right: 4px; bottom: 4px; color: #666; }
.launch.dim, .off .launch { color: #aaa; }
.off, .off .chev { color: #aaa; }
.body { display: flex; }
.g-clip { width: 165px; } .g-clip .label { padding-right: 16px; }
.g-slides { width: 137px; }
.g-font { width: 295px; } .g-font .label { padding-right: 17px; }
.g-para { width: 338px; } .g-para .label { padding-right: 17px; }
.g-draw { width: 363px; } .g-draw .label { padding-right: 17px; }
.g-edit { width: 102px; } .g-edit .label { padding-right: 1px; }
.rows { display: flex; flex-direction: column; padding-top: 3px; }
.cmd { height: 23px; display: flex; align-items: center; }
.cmd span { margin-left: 3px; white-space: nowrap; }
.cmd .chev { margin-left: 4px; }
.cmd .wide { margin-left: 10px; }
.g-slides .cmd span { margin-left: 2px; }
.smart { letter-spacing: -.15px; }
.big { display: flex; flex-direction: column; align-items: center; line-height: 15px; white-space: nowrap; }
.with-chev { display: flex; align-items: center; gap: 3px; }
.paste { width: 53px; padding: 8px 0 0 5px; }
.paste span { margin-top: 3px; }
.paste .chev { margin-top: 4px; }
.newslide { width: 53px; padding: 6px 0 0 3px; }
.newslide svg:first-child { margin-bottom: 7px; }
.newslide > span:nth-child(3), .styles > span:nth-child(3) { margin-top: 1px; }
.stack { padding: 10px 0 0 6px; }
.line { display: flex; align-items: center; height: 24px; }
.l2 { margin-top: 7px; }
.cell { width: 24px; height: 20px; display: flex; align-items: center; justify-content: center; position: relative; font-size: 13px; }
b.cell, u.cell { font-weight: 700; }
u.cell { font-weight: 600; }
.combo { height: 23px; display: flex; border: 1px solid #aaa; background: #f2f2f2; font-size: 12px; line-height: 21px; letter-spacing: 0; }
.combo span { flex: 1; padding-left: 2px; }
.combo i { width: 13px; border-left: 1px solid #aaa; display: grid; place-items: center; }
.c-name { width: 152px; margin-left: 2px; }
.c-size { width: 46px; margin-left: 2px; }
.grow-a { font-size: 15px; font-weight: 600; padding-right: 1px; }
.shrink-a { font-size: 12px; font-weight: 600; padding-top: 2px; margin-left: 2px; padding-right: 1px; }
.cell.grow-a svg, .cell.shrink-a svg { position: absolute; right: 1px; top: 2px; }
.sep { width: 1px; height: 20px; background: #ddd; margin-left: 2px; }
.s5 { margin-left: 1px; }
.eraser { margin-left: 9px; }
.line .c1 { margin: 0 -1px 0 1px; }
.line .c3 { margin-left: 3px; }
.line .c2 { margin-left: 2px; }
.line .c5 { margin-left: 5px; }
.line .s7 { margin-left: 8px; }
.line .s3 { margin-left: 3px; }
.line .s2 { margin: 0 3px 0 9px; }
.line .s2b { margin-left: 3px; }
em.cell { font: italic 14px/20px "Liberation Serif", serif; font-weight: 700; }
s.cell { font-size: 11px; letter-spacing: -.6px; }
.sh { font-weight: 700; font-size: 14px; text-shadow: 1.500px 1.500px 1px #ccc; }
.av { font-size: 12px; letter-spacing: -.3px; padding-bottom: 4px; }
.av svg { position: absolute; bottom: 0; left: 4px; }
.aa { margin-left: 5px; }
.hl { font-size: 11px; padding: 0 5px 6px 0; }
.hl svg { position: absolute; left: 3px; top: 4px; }
.fa { margin-left: 6px; font-weight: 600; font-size: 15px; }
.p-stack { padding-left: 7px; width: 187px; }
.gallery { display: flex; width: 138px; height: 62px; margin: 6px 0 0 9px; border: 1px solid #e1e1e1; flex: none; }
.gal-btns { margin: -1px; width: 16px; flex: none; }
.gal-btns i { height: 21px; border: 1px solid #aaa; display: grid; place-items: center; color: #666; margin-bottom: -.5px; background: #fff; }
.gal-btns .dim { background: #fafafa; color: #ccc; border-color: #ddd; }
.arrange { width: 50px; padding: 8px 0 0 2px; }
.arrange span { margin-top: 5px; letter-spacing: -.25px; }
.arrange .chev { margin-top: 4px; }
.styles { width: 44px; padding: 9px 0 0 1px; }
.styles > span:nth-child(2) { margin-top: 2px; }
.g-draw .rows { margin-left: 5px; }
.g-edit .rows { margin-left: 11px; }
.rep { font: 600 10.5px "Open Sans", sans-serif; letter-spacing: -.3px; margin-right: -1px; }
.collapse { margin: 83px 0 0 21px; }

/* workspace */
.work { height: 674px; flex: none; display: flex; }
.panel { width: 297px; height: 673px; border-right: 1px solid #c8c8c8; display: flex; flex: none; overflow: hidden; }
.thumbs { width: 277px; height: 673px; padding-top: 19px; overflow: hidden; }
.item { height: 144px; display: flex; }
.num { width: 35px; padding-left: 12px; font-size: 14.500px; line-height: 8px; color: #444; letter-spacing: 0; }
.sel .num { color: #d24726; }
.thumb { width: 220px; height: 124px; border: 1px solid #c8c8c8; position: relative; color: #fff; overflow: hidden; flex: none; }
.sel .thumb { border-color: #fff; outline: 3px solid #750b12; overflow: visible; }
.bg { position: absolute; left: 0; top: 0; width: 100%; height: 100%; }
.thumb h3 { position: relative; margin: 0; font: 700 14px/16px "DejaVu Sans", sans-serif; text-align: center; letter-spacing: -.15px; }
.t2 h3 { color: #00aedf; padding-top: 9px; }
.thumb ul { position: relative; margin: 0; padding: 0 0 0 39px; list-style: none; font-size: 4px; line-height: 6.900px; font-weight: 800; letter-spacing: -.1px; }
.thumb li::before { content: "✓"; margin-right: 2px; }
.t3 h3 { font: 700 13.700px/16px "Liberation Sans", sans-serif; padding: 12px 3px 0 0; letter-spacing: 0; }
.t4 h3 { padding-top: 11px; } .t5 h3 { padding-top: 10px; } .t6 h3 { padding-top: 8px; }
.thumb hr { position: absolute; left: 0; top: 34.500px; width: 94px; height: 1px; background: #015f7e; border: 0; margin: 0; }
.pg { position: absolute; left: 198px; top: 107px; font: 3px/6px "DejaVu Sans", sans-serif; color: #e0b01c; }
.text { position: absolute; font: 700 5px/9.700px "Open Sans", sans-serif; letter-spacing: 0; }
.text p { margin: 0; white-space: nowrap; text-align: justify; text-align-last: justify; }
.text .last, .t6 .text p { text-align-last: left; }
.t3 .text { left: 14.500px; top: 38.700px; width: 196px; }
.t4 .text { left: 25px; top: 38px; width: 173px; }
.t5 .text { left: 23.500px; top: 39px; width: 174px; line-height: 5.700px; }
.t6 .text { left: 21.500px; top: 39px; line-height: 7.700px; font-size: 5.100px; }
.t6 .box { display: flex; align-items: center; }
.t6 .box::before { content: ""; width: 4px; height: 4px; border: 1px solid #fff; margin: 0 2px 0 -6px; }
.vscroll { width: 15px; margin: 2px 0 2px; background: #f0f0f0; display: flex; flex-direction: column; flex: none; }
.btn { width: 15px; height: 15px; border: 1px solid #aaa; background: #fff; color: #666; display: grid; place-items: center; flex: none; }
.end { margin-top: auto; }
.grip { border: 1px solid #aaa; background: #fff; }
.panel .grip { height: 196px; margin-top: 42px; }
.editor { width: 1143px; padding-left: 4px; background: linear-gradient(#c8c8c8, #c8c8c8) 0 670px / 100% 1px no-repeat; }
.stage { display: flex; height: 648px; }
.slide { position: relative; width: 1095px; height: 617px; margin: 17px 11px 0 17px; border: 1px solid #c8c8c8; color: #fff; flex: none; overflow: hidden; }
.slide h1 { position: relative; margin: 0; padding: 45px 0 0 406px; font: 700 68px/80px "DejaVu Sans", sans-serif; color: #00aedf; letter-spacing: 0; }
.slide ul { position: relative; list-style: none; margin: -6px 0 0; padding: 0 0 0 199px; font-size: 20.500px; font-weight: 700; letter-spacing: -.65px; line-height: 36px; }
.slide li { display: flex; gap: 9px; }
.slide li svg { margin-top: 8px; }
.pageno { position: absolute; left: 994px; top: 548px; color: #e0b01c; font: 14px/16px "DejaVu Sans", sans-serif; }
.main-scroll { height: 613px; }
.main-scroll .grip { height: 39px; margin-top: 39px; }
.jump { height: 0; display: flex; flex-direction: column; align-items: center; gap: 9px; }
.jump svg:first-child { margin-top: 4px; }
.hscroll { display: flex; height: 15px; margin: 3px 0 0; }
.hscroll .grip { width: 1065px; margin-left: 26px; margin-right: -1px; }

/* status bar */
.status { height: 21px; flex: none; background: #b7472a; color: #fff; display: flex; align-items: center; font-size: 11px; font-weight: 600; letter-spacing: -.2px; white-space: nowrap; }
.status > * { flex: none; }
.st-slide { width: 90px; padding-left: 8px; letter-spacing: -.1px; }
.st-acc { margin-left: 16px; }
.st-acctext { width: 787px; padding-left: 2px; }
.st-n { width: 55px; padding-left: 5px; }
.st-c { width: 76px; padding-left: 3px; }
.st-view { width: 40px; height: 21px; display: grid; place-items: center; }
.st-view.on { background: #750b12; }
.st-zoom { margin-left: 6px; }
.st-pct { width: 46px; padding-left: 11px; font-weight: 400; }

/* taskbar */
.taskbar { height: 48px; flex: none; background: linear-gradient(90deg, #34271a, #2f261f 30%, #2f2620 42%, #352114 55%, #352114); color: #fff; display: grid; grid-template-columns: 501px 439px 500px; font-size: 12px; letter-spacing: -.2px; }
.weather { display: flex; gap: 8px; padding: 9px 0 0 21px; }
.weather svg { margin-top: 6px; }
.weather span, .clock span { display: block; }
.weather .sub { color: #c4bfba; letter-spacing: 0; }
.apps { display: flex; padding-top: 4px; }
.apps > span { width: 40px; height: 40px; margin: 0 2px; display: grid; place-items: center; position: relative; border-radius: 4px; flex: none; }
.chrome { margin: -6px 0 0 7px; }
.run::after { content: ""; position: absolute; bottom: 1px; left: 17px; width: 6px; height: 3px; border-radius: 2px; background: #9b948e; }
.active { background: #443227; box-shadow: inset 0 0 0 1px #4c3a2f; }
.run.active::after { left: 12px; width: 16px; background: #4cc2ff; }
.tray { display: flex; align-items: center; padding-left: 322px; }
.tr-cloud { margin-left: 10px; }
.tr-net { margin-left: 12px; }
.tr-vol { margin-left: 8px; }
.clock { width: 67px; text-align: right; letter-spacing: -.45px; }
```
